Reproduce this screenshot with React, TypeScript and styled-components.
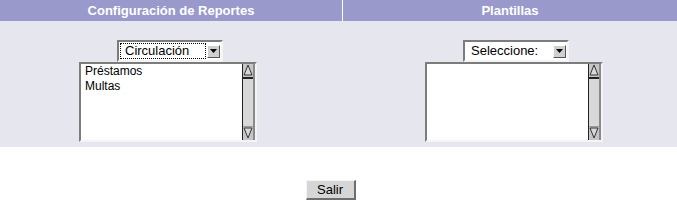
import React from "react";
import styled, { createGlobalStyle } from "styled-components";

const GlobalStyle = createGlobalStyle`
  body {
    margin: 0;
    background: #ffffff;
    font-family: "Liberation Sans", Arial, sans-serif;
    color: #000;
  }
`;

const HeaderRow = styled.div`
  display: grid;
  grid-template-columns: 342px 1fr;
  column-gap: 1px;
  background: #ffffff;
  height: 21px;
`;

const HeaderCell = styled.div`
  background: #9999cc;
  color: #ffffff;
  font-weight: bold;
  font-size: 13px;
  line-height: 21px;
  text-align: center;
`;

const Panel = styled.div`
  display: grid;
  grid-template-columns: 343px 1fr;
  background: #e6e6ef;
  height: 126px;
`;

const Column = styled.div<{ $offset: number }>`
  padding-top: 19px;
  padding-left: ${(p) => p.$offset}px;
`;

const Group = styled.div`
  display: flex;
  flex-direction: column;
  width: 178px;
`;

const SelectBox = styled.div`
  box-sizing: border-box;
  margin-left: 38px;
  width: 106px;
  height: 22px;
  display: flex;
  align-items: center;
  background: #ffffff;
  border-style: solid;
  border-width: 2px;
  border-color: #7c7c7c #f4f4f6 #f4f4f6 #7c7c7c;
  font-size: 13px;
`;

const SelectText = styled.div<{ $focused?: boolean }>`
  box-sizing: border-box;
  flex: 1;
  height: 16px;
  margin: 0 1px;
  padding-left: 4px;
  line-height: 14px;
  border: 1px ${(p) => (p.$focused ? "dotted #000" : "solid transparent")};
`;

const ArrowButton = styled.div`
  box-sizing: border-box;
  width: 13px;
  height: 13px;
  margin-right: 1px;
  background: #cfcfcf;
  border-style: solid;
  border-width: 1px;
  border-color: #ffffff #555555 #555555 #ffffff;
  display: flex;
  align-items: center;
  justify-content: center;
`;

const ListBox = styled.div`
  box-sizing: border-box;
  width: 178px;
  height: 80px;
  display: flex;
  background: #ffffff;
  border-style: solid;
  border-width: 2px;
  border-color: #7c7c7c #f4f4f6 #f4f4f6 #7c7c7c;
`;

const Items = styled.div`
  flex: 1;
  padding-left: 4px;
  font-size: 12px;
  line-height: 15px;
`;

const ScrollBar = styled.div`
  box-sizing: border-box;
  width: 13px;
  display: flex;
  flex-direction: column;
  background: #c6c6c6;
  border-left: 1px solid #222222;
  border-right: 2px solid #8a8a8a;
`;

const Thumb = styled.div`
  flex: 1;
  background: #d8d8d8;
  border-top: 2px solid #222222;
  border-bottom: 1px solid #9a9a9a;
`;

const Footer = styled.div`
  display: flex;
  justify-content: center;
  padding: 33px 16px 0 0;
`;

const Button = styled.button`
  box-sizing: border-box;
  width: 50px;
  height: 20px;
  padding: 0;
  background: #d6d6d6;
  border-style: solid;
  border-width: 1px 2px 2px 1px;
  border-color: #f4f4f4 #6e6e6e #6e6e6e #f4f4f4;
  font-family: "Liberation Sans", Arial, sans-serif;
  font-size: 13px;
  color: #000;
`;

function ScrollArrow({ down }: { down?: boolean }) {
  const pts = down ? "1,1 9,1 5,11" : "5,1 9,11 1,11";
  return (
    <svg width="10" height="13" viewBox="0 0 10 13">
      <polygon points={pts} fill="#d8d8d8" stroke="#333" strokeWidth="1" />
    </svg>
  );
}

function DropArrow() {
  return (
    <svg width="9" height="7" viewBox="0 0 9 7">
      <polygon points="1,1 8,1 4.5,5" fill="#000" />
    </svg>
  );
}

function ReportSelect({ label, focused }: { label: string; focused?: boolean }) {
  return (
    <SelectBox>
      <SelectText $focused={focused}>{label}</SelectText>
      <ArrowButton>
        <DropArrow />
      </ArrowButton>
    </SelectBox>
  );
}

function List({ items }: { items: string[] }) {
  return (
    <ListBox>
      <Items>
        {items.map((i) => (
          <div key={i}>{i}</div>
        ))}
      </Items>
      <ScrollBar>
        <ScrollArrow />
        <Thumb />
        <ScrollArrow down />
      </ScrollBar>
    </ListBox>
  );
}

export default function App() {
  return (
    <>
      <GlobalStyle />
      <HeaderRow>
        <HeaderCell>Configuración de Reportes</HeaderCell>
        <HeaderCell>Plantillas</HeaderCell>
      </HeaderRow>
      <Panel>
        <Column $offset={79}>
          <Group>
            <ReportSelect label="Circulación" focused />
            <List items={["Préstamos", "Multas"]} />
          </Group>
        </Column>
        <Column $offset={82}>
          <Group>
            <ReportSelect label="Seleccione:" />
            <List items={[]} />
          </Group>
        </Column>
      </Panel>
      <Footer>
        <Button>Salir</Button>
      </Footer>
    </>
  );
}
